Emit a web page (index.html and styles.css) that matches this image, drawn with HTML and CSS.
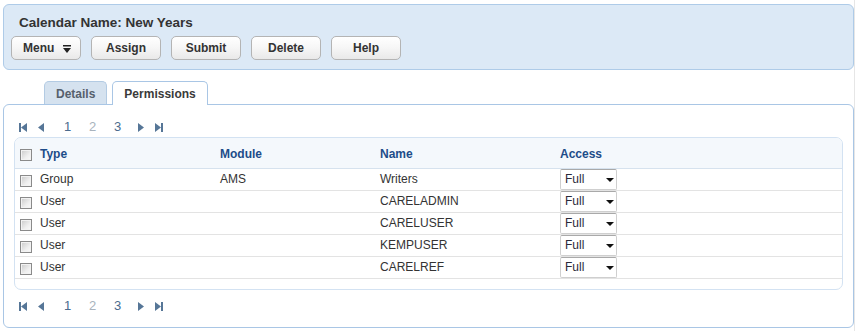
FILE: index.html
```html
<!DOCTYPE html>
<html>
<head>
<meta charset="utf-8">
<title>Calendar Permissions</title>
<link rel="stylesheet" href="styles.css">
</head>
<body>
<div class="page">
  <div class="head">
    <div class="title">Calendar Name: New Years</div>
    <div class="toolbar">
      <button class="btn btn-menu">Menu<svg class="menu-ico" width="8" height="8" viewBox="0 0 8 8"><rect x="0" y="0" width="8" height="1.5"/><polygon points="0,3 8,3 4,8"/></svg></button>
      <button class="btn">Assign</button>
      <button class="btn">Submit</button>
      <button class="btn">Delete</button>
      <button class="btn">Help</button>
    </div>
  </div>

  <div class="tabs">
    <div class="tab">Details</div>
    <div class="tab tab-active">Permissions</div>
  </div>

  <div class="panel">
    <div class="pager">
      <svg class="pg-ico pg-first" width="8" height="9" viewBox="0 0 8 9"><rect x="0" y="0" width="2" height="9"/><polygon points="8,0 8,9 2,4.5"/></svg>
      <svg class="pg-ico pg-prev" width="6" height="9" viewBox="0 0 6 9"><polygon points="6,0 6,9 0,4.5"/></svg>
      <span class="pg-num">1</span>
      <span class="pg-num pg-cur">2</span>
      <span class="pg-num">3</span>
      <svg class="pg-ico pg-next" width="6" height="9" viewBox="0 0 6 9"><polygon points="0,0 0,9 6,4.5"/></svg>
      <svg class="pg-ico pg-last" width="8" height="9" viewBox="0 0 8 9"><polygon points="0,0 0,9 6,4.5"/><rect x="6" y="0" width="2" height="9"/></svg>
    </div>

    <div class="grid">
      <div class="row row-head">
        <div class="cell"><span class="chk"></span></div>
        <div class="cell">Type</div>
        <div class="cell">Module</div>
        <div class="cell">Name</div>
        <div class="cell">Access</div>
      </div>
      <div class="row">
        <div class="cell"><span class="chk"></span></div>
        <div class="cell">Group</div>
        <div class="cell">AMS</div>
        <div class="cell">Writers</div>
        <div class="cell cell-sel"><span class="sel">Full<span class="sel-arrow"></span></span></div>
      </div>
      <div class="row">
        <div class="cell"><span class="chk"></span></div>
        <div class="cell">User</div>
        <div class="cell"></div>
        <div class="cell">CARELADMIN</div>
        <div class="cell cell-sel"><span class="sel">Full<span class="sel-arrow"></span></span></div>
      </div>
      <div class="row">
        <div class="cell"><span class="chk"></span></div>
        <div class="cell">User</div>
        <div class="cell"></div>
        <div class="cell">CARELUSER</div>
        <div class="cell cell-sel"><span class="sel">Full<span class="sel-arrow"></span></span></div>
      </div>
      <div class="row">
        <div class="cell"><span class="chk"></span></div>
        <div class="cell">User</div>
        <div class="cell"></div>
        <div class="cell">KEMPUSER</div>
        <div class="cell cell-sel"><span class="sel">Full<span class="sel-arrow"></span></span></div>
      </div>
      <div class="row">
        <div class="cell"><span class="chk"></span></div>
        <div class="cell">User</div>
        <div class="cell"></div>
        <div class="cell">CARELREF</div>
        <div class="cell cell-sel"><span class="sel">Full<span class="sel-arrow"></span></span></div>
      </div>
    </div>

    <div class="pager pager-bottom">
      <svg class="pg-ico pg-first" width="8" height="9" viewBox="0 0 8 9"><rect x="0" y="0" width="2" height="9"/><polygon points="8,0 8,9 2,4.5"/></svg>
      <svg class="pg-ico pg-prev" width="6" height="9" viewBox="0 0 6 9"><polygon points="6,0 6,9 0,4.5"/></svg>
      <span class="pg-num">1</span>
      <span class="pg-num pg-cur">2</span>
      <span class="pg-num">3</span>
      <svg class="pg-ico pg-next" width="6" height="9" viewBox="0 0 6 9"><polygon points="0,0 0,9 6,4.5"/></svg>
      <svg class="pg-ico pg-last" width="8" height="9" viewBox="0 0 8 9"><polygon points="0,0 0,9 6,4.5"/><rect x="6" y="0" width="2" height="9"/></svg>
    </div>
  </div>
</div>
</body>
</html>
```

FILE: styles.css
```css
* { box-sizing: border-box; }
html, body { margin: 0; padding: 0; background: #fff; }
body {
  font-family: "Liberation Sans", Arial, sans-serif;
  font-size: 12px;
  color: #333;
}
.page {
  width: 855px;
  min-height: 331px;
  padding: 4px 0 0 3px;
  border-right: 1px solid #e6e6e6;
}

/* header panel */
.head {
  height: 66px;
  border: 1px solid #aecbe8;
  border-radius: 6px;
  background: #dce9f6;
  padding: 10px 0 0 7px;
}
.title {
  padding-left: 8px;
  font-size: 13.5px;
  font-weight: bold;
  line-height: 16px;
  color: #333;
}
.toolbar {
  display: flex;
  gap: 10px;
  margin-top: 5px;
}
.btn {
  width: 70px;
  height: 24px;
  margin: 0;
  padding: 0;
  border: 1px solid #b4b4b4;
  border-radius: 5px;
  background: linear-gradient(#ffffff, #f6f6f6 50%, #e9e9e9);
  font-family: "Liberation Sans", Arial, sans-serif;
  font-size: 12px;
  font-weight: bold;
  line-height: 22px;
  color: #333;
  text-align: center;
}
.btn-menu {
  display: flex;
  align-items: center;
  padding-left: 11px;
  text-align: left;
}
.menu-ico {
  margin-left: 9px;
  margin-top: 1px;
  fill: #222;
}

/* tabs */
.tabs {
  display: flex;
  align-items: flex-end;
  gap: 5px;
  height: 23px;
  margin-top: 11px;
  padding-left: 41px;
}
.tab {
  height: 23px;
  padding: 5px 11px 0;
  border: 1px solid #b3cbe3;
  border-bottom: 0;
  border-radius: 5px 5px 0 0;
  background: #d5e2ef;
  font-weight: bold;
  line-height: 14px;
  color: #55606d;
}
.tab-active {
  position: relative;
  z-index: 1;
  height: 24px;
  margin-bottom: -1px;
  background: #fff;
  color: #3a3a3a;
  border-color: #a9c6e5;
}

/* content panel */
.panel {
  height: 224px;
  border: 1px solid #a9c6e5;
  border-radius: 6px;
  padding: 14px 10px 13px;
}
.pager {
  display: flex;
  align-items: center;
  height: 16px;
  margin-bottom: 2px;
  padding-left: 5px;
}
.pager-bottom { margin: 8px 0 0; }
.pg-ico { fill: #567697; flex: none; }
.pg-prev { margin-left: 11px; }
.pg-num {
  width: 25px;
  text-align: center;
  font-size: 13px;
  line-height: 16px;
  color: #4b6b8e;
}
.pg-num:first-of-type { margin-left: 11px; }
.pg-cur { color: #a9b3bd; }
.pg-next { margin-left: 8px; }
.pg-last { margin-left: 11px; }

/* grid */
.grid {
  height: 153px;
  border: 1px solid #d3e2f2;
  border-radius: 7px;
}
.row {
  display: grid;
  grid-template-columns: 25px 180px 160px 180px 1fr;
  height: 22px;
  border-bottom: 1px solid #e3e3e3;
}
.row-head {
  height: 31px;
  background: #f4f8fc;
  border-bottom-color: #d6e2ee;
  border-radius: 6px 6px 0 0;
}
.cell {
  padding-top: 3px;
  line-height: 14px;
  white-space: nowrap;
}
.row-head .cell {
  padding-top: 9px;
  font-weight: bold;
  color: #1d4c89;
}
.chk {
  display: block;
  width: 12px;
  height: 12px;
  margin: 3px 0 0 5px;
  border: 1px solid #8a8a8a;
  background: linear-gradient(135deg, #c9c9c9, #eeeeee 60%, #fafafa);
  box-shadow: inset 0 0 0 1px #f2f2f2;
}
.row-head .chk { margin-top: 2px; }
.cell-sel { padding-top: 0; }
.sel {
  position: relative;
  display: block;
  width: 57px;
  height: 21px;
  padding-left: 4px;
  border: 1px solid #cfcfcf;
  border-top-color: #a9a9a9;
  border-radius: 2px;
  background: #fff;
  line-height: 19px;
  color: #2a2a3a;
}
.sel-arrow {
  position: absolute;
  left: 45px;
  top: 8px;
  width: 0;
  height: 0;
  border-left: 4px solid transparent;
  border-right: 4px solid transparent;
  border-top: 4px solid #111;
}
```
